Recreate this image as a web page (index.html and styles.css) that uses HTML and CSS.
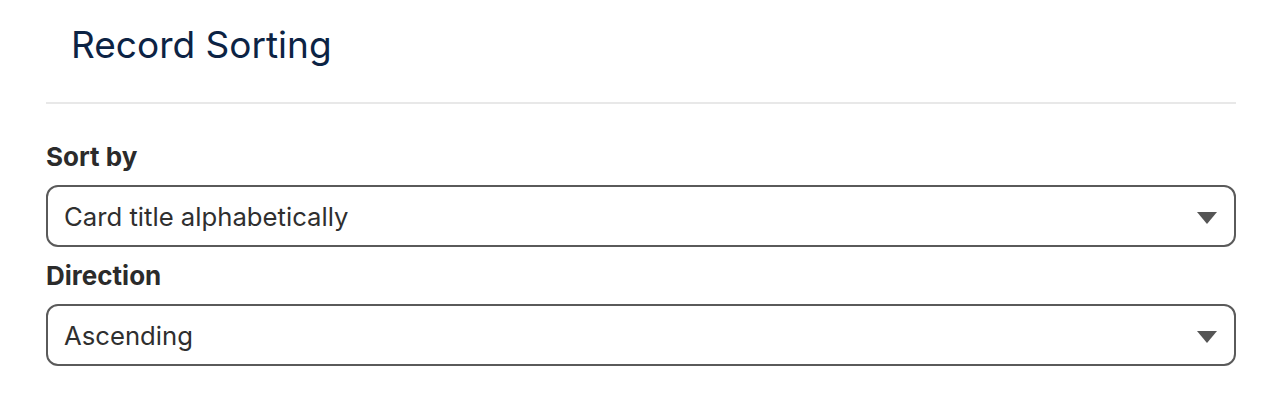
FILE: index.html
```html
<!DOCTYPE html>
<html lang="en">
<head>
  <meta charset="UTF-8" />
  <title>Record Sorting</title>
  <link rel="stylesheet" href="styles.css">
</head>
<body>
  <div class="panel">
    <div class="panel-header">
      <h2>Record Sorting</h2>
    </div>

    <form class="sort-form">
      <div class="form-group">
        <label for="sortBy">Sort by</label>
        <div class="select-wrap">
          <select id="sortBy" name="sortBy">
            <option>Card title alphabetically</option>
            <option>Date created</option>
            <option>Date modified</option>
          </select>
          <svg class="arrow" width="20" height="12" viewBox="0 0 20 12"><path d="M0 0H20L10 12Z" fill="#555"/></svg>
        </div>
      </div>

      <div class="form-group">
        <label for="direction">Direction</label>
        <div class="select-wrap">
          <select id="direction" name="direction">
            <option>Ascending</option>
            <option>Descending</option>
          </select>
          <svg class="arrow" width="20" height="12" viewBox="0 0 20 12"><path d="M0 0H20L10 12Z" fill="#555"/></svg>
        </div>
      </div>
    </form>
  </div>
</body>
</html>
```

FILE: styles.css
```css
body {
  font-family: 'Inter', 'Noto Sans', sans-serif;
  background: #fff;
  margin: 0;
  padding: 0;
}

.panel {
  margin: 0 42px 0 46px;
}

.panel-header {
  padding: 22px 25px 0;
  height: 104px;
  border-bottom: 2px solid #e8e8e8;
  box-sizing: border-box;
}

.panel-header h2 {
  margin: 0;
  font-size: 37px;
  font-weight: 400;
  color: #0c2344;
}

.sort-form {
  padding-top: 38px;
}

.form-group {
  margin-bottom: 14px;
}

.form-group label {
  display: block;
  font-size: 26px;
  font-weight: 700;
  color: #2b2b2b;
  margin-bottom: 13px;
  line-height: 30px;
}

.select-wrap {
  position: relative;
}

.select-wrap select {
  -webkit-appearance: none;
  appearance: none;
  display: block;
  width: 100%;
  height: 62px;
  padding: 0 50px 0 16px;
  border: 2px solid #5a5a5a;
  border-radius: 12px;
  background: #fff;
  font-family: inherit;
  font-size: 25.7px;
  color: #2f2f2f;
  box-sizing: border-box;
}

.select-wrap .arrow {
  position: absolute;
  right: 19px;
  top: 27px;
  pointer-events: none;
}
```
